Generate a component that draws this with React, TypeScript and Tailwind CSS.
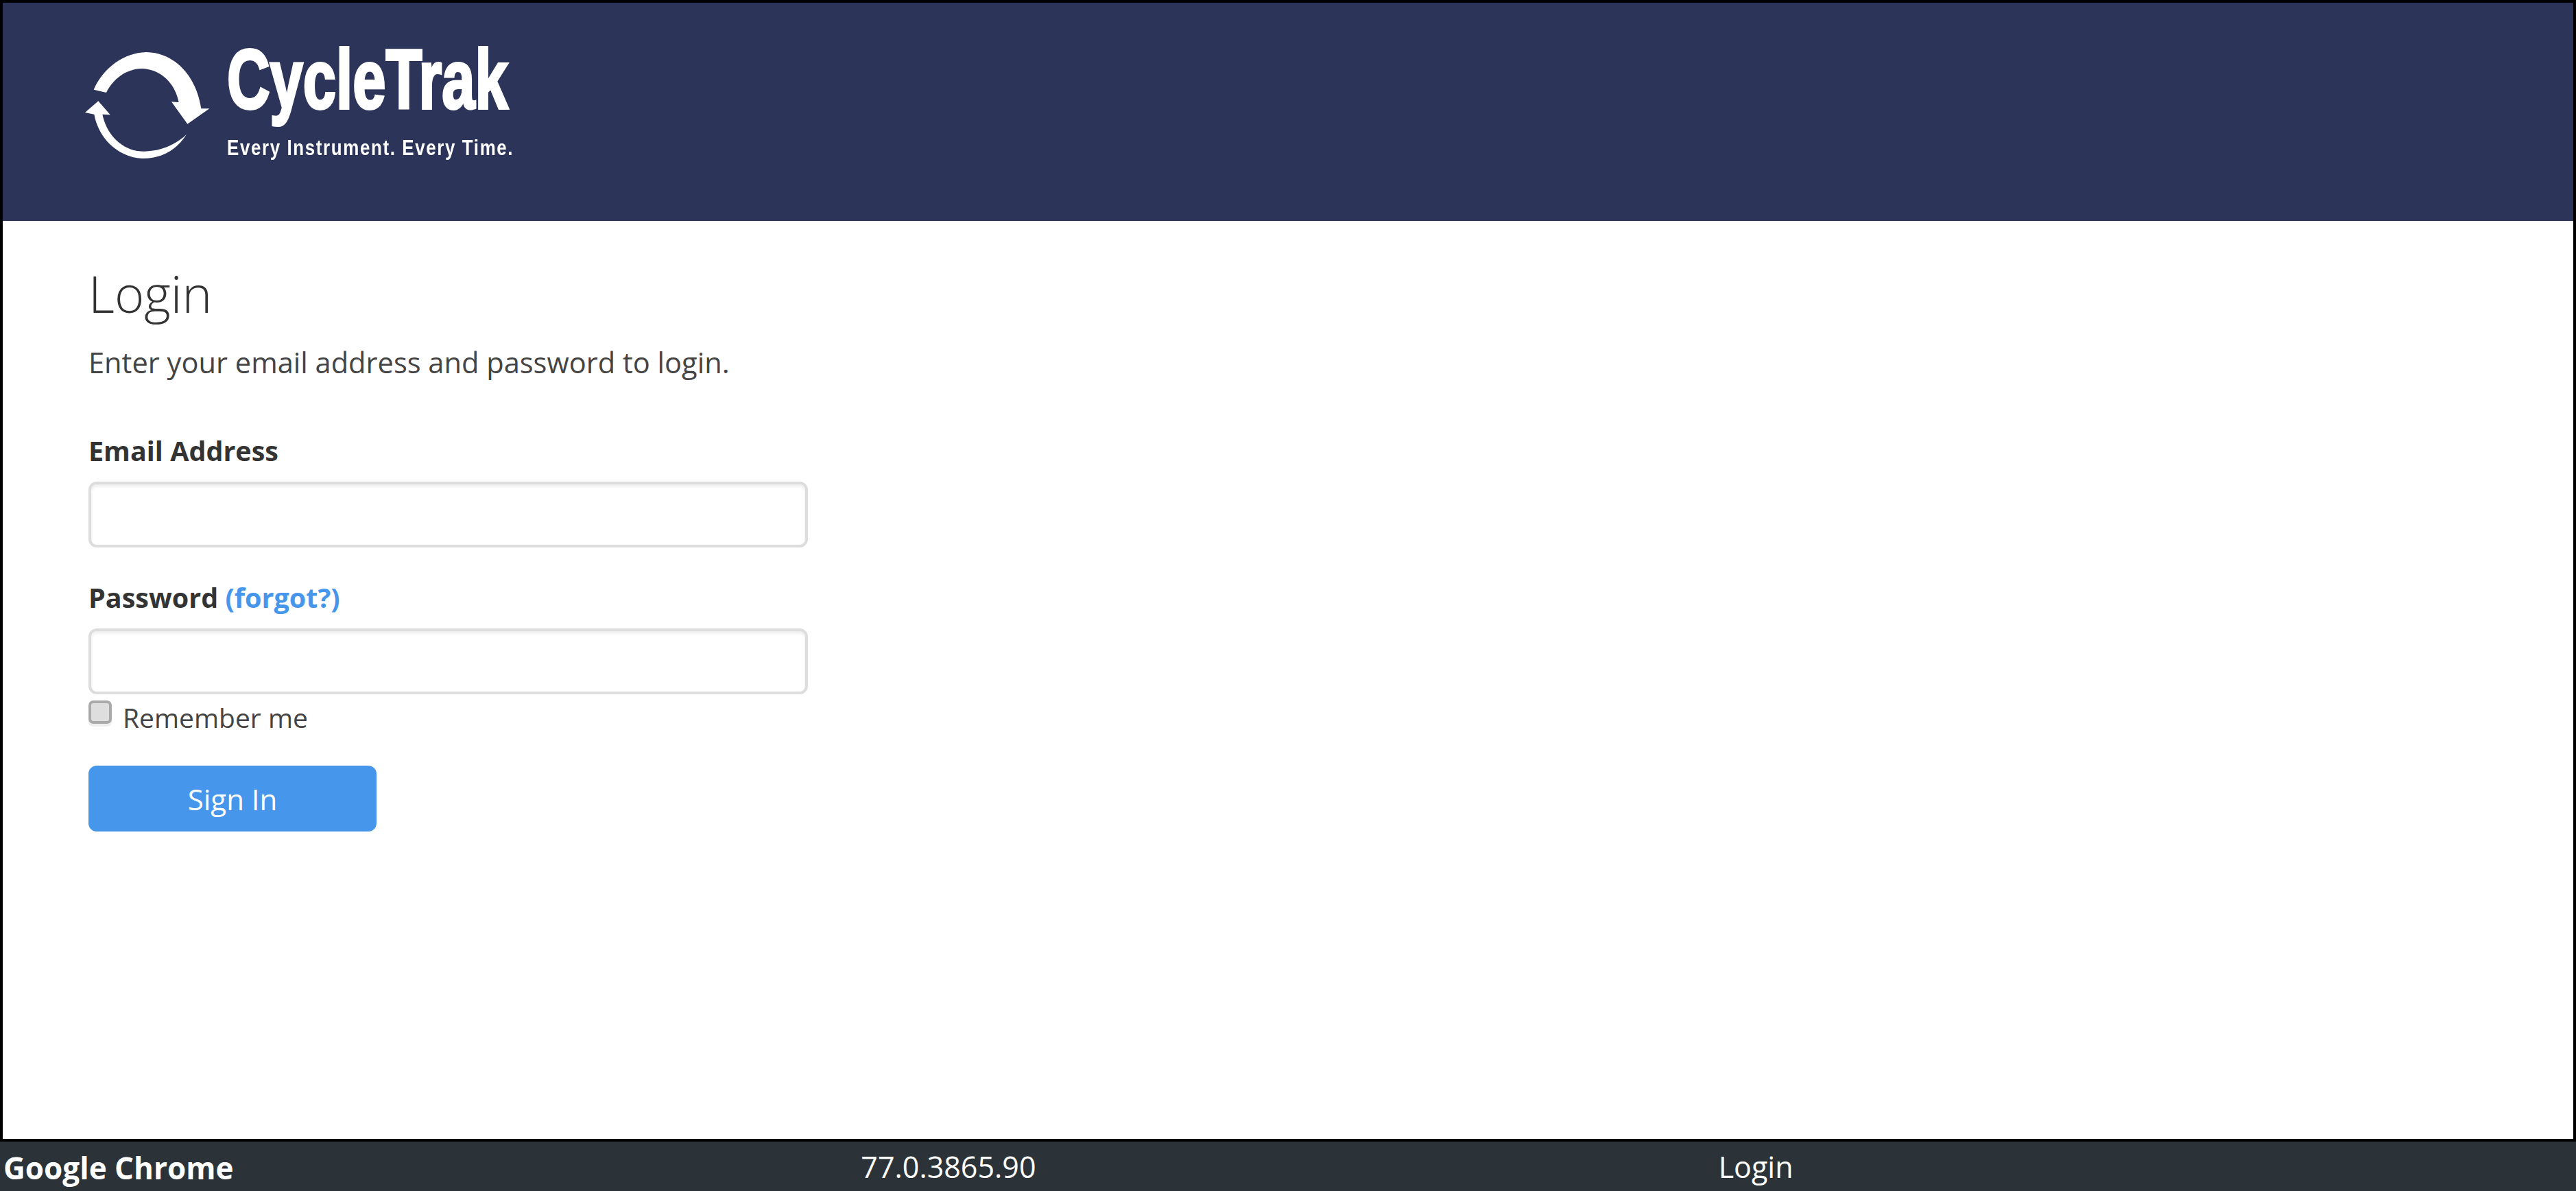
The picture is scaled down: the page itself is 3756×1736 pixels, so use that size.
import React from "react";

const font = { fontFamily: '"Open Sans", "Noto Sans", sans-serif' };

function LogoArrows() {
  return (
    <svg width="225" height="200" viewBox="0 0 675 600" className="shrink-0 blur-[0.7px]">
      <path
        fill="#fff"
        d="M110 242 C150 150 240 80 340 78 C470 80 560 190 580 325 L616 325 L520 392 L450 295 L482 297 C465 210 400 152 320 150 C250 152 195 195 165 255 Z"
      />
      <path
        fill="#fff"
        d="M516 438 C470 510 400 545 320 543 C210 535 130 450 112 350 L72 342 L130 292 L182 352 L148 350 C165 430 220 495 300 510 C380 520 460 490 516 438 Z"
      />
    </svg>
  );
}

function Field({ label, children }: { label: React.ReactNode; children?: React.ReactNode }) {
  return (
    <div className="flex flex-col">
      <label className="text-[39.5px] leading-[54px] font-bold text-[#333]">{label}</label>
      <input className="mt-[18px] w-[1049px] h-[96px] bg-white border-[4px] border-[#dddddd] rounded-[12px] shadow-[inset_0_3px_4px_rgba(0,0,0,0.08)] outline-none" />
      {children}
    </div>
  );
}

export default function App() {
  return (
    <div className="w-[3756px] h-[1736px] flex flex-col bg-white overflow-hidden" style={font}>
      <div className="h-[1664px] border-[4px] border-black flex flex-col">
        <header className="h-[318px] bg-[#2c3559] pl-[96px] pt-[46px] flex items-start shrink-0">
          <LogoArrows />
          <div className="ml-[6px] flex flex-col text-white blur-[0.6px]" style={{ fontFamily: '"Liberation Sans", sans-serif' }}>
            <div className="text-[123px] leading-[120px] mt-[6px] font-bold origin-left scale-x-[0.705] whitespace-nowrap [-webkit-text-stroke:4px_white]">
              CycleTrak
            </div>
            <div className="text-[32px] leading-[40px] mt-[19px] font-bold origin-left scale-x-[0.81] tracking-[2px] whitespace-nowrap">
              Every Instrument. Every Time.
            </div>
          </div>
        </header>
        <main className="flex-1 pl-[125px] pt-[64px] flex flex-col items-start">
          <h1 className="text-[74px] leading-[84px] font-light text-[#333]">Login</h1>
          <p className="mt-[28px] text-[41.6px] leading-[60px] font-normal text-[#444]">
            Enter your email address and password to login.
          </p>
          <div className="mt-[72px]">
            <Field label="Email Address" />
          </div>
          <div className="mt-[46px]">
            <Field
              label={
                <>
                  Password <a className="text-[#4696ec]">(forgot?)</a>
                </>
              }
            >
              <label className="flex items-start mt-[9px] h-[50px]">
                <input
                  type="checkbox"
                  className="appearance-none w-[34px] h-[34px] bg-[#dedede] border-[4px] border-[#aaaaaa] rounded-[7px] shadow-[0_4px_0_#eeeeee]"
                />
                <span className="ml-[16px] text-[39px] leading-[50px] font-normal text-[#444]">Remember me</span>
              </label>
            </Field>
          </div>
          <button className="mt-[45px] w-[420px] h-[96px] bg-[#4696ec] text-white rounded-[12px] text-[42px] font-normal">
            Sign In
          </button>
        </main>
      </div>
      <footer className="flex-1 bg-[#2c3338] grid grid-cols-3 items-center text-white text-[43px] pl-[5px] pt-[3px]">
        <div className="font-bold text-[44px]">Google Chrome</div>
        <div className="font-normal">77.0.3865.90</div>
        <div className="font-normal">Login</div>
      </footer>
    </div>
  );
}
